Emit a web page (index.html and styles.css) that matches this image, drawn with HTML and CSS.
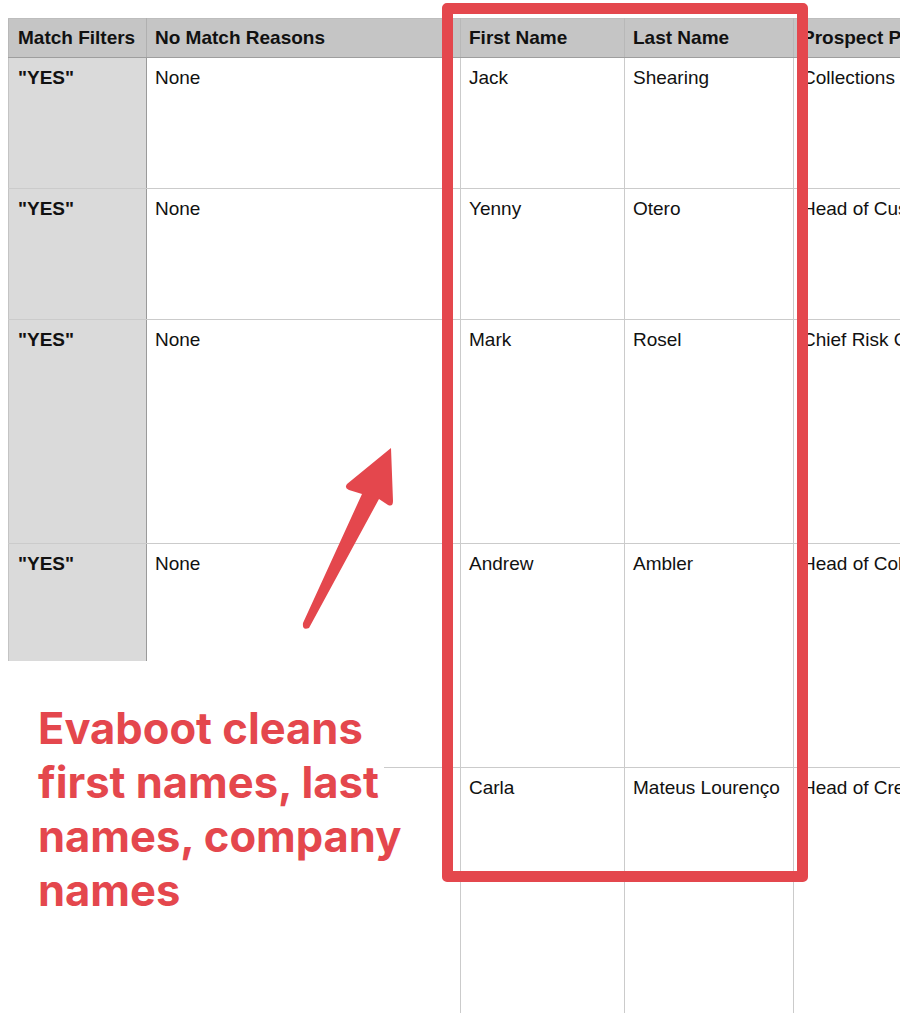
FILE: index.html
```html
<!DOCTYPE html>
<html lang="en">
<head>
<meta charset="utf-8">
<title>Evaboot cleaned export</title>
<link rel="stylesheet" href="styles.css">
</head>
<body>
<div class="page">
  <table class="sheet">
    <colgroup>
      <col class="c-match">
      <col class="c-reason">
      <col class="c-first">
      <col class="c-last">
      <col class="c-pos">
    </colgroup>
    <thead>
      <tr>
        <th class="match">Match Filters</th>
        <th>No Match Reasons</th>
        <th>First Name</th>
        <th>Last Name</th>
        <th>Prospect Position</th>
      </tr>
    </thead>
    <tbody>
      <tr class="r-short">
        <td class="match">"YES"</td>
        <td>None</td>
        <td>Jack</td>
        <td>Shearing</td>
        <td>Collections Manager</td>
      </tr>
      <tr class="r-short">
        <td class="match">"YES"</td>
        <td>None</td>
        <td>Yenny</td>
        <td>Otero</td>
        <td>Head of Customer Success</td>
      </tr>
      <tr class="r-tall">
        <td class="match">"YES"</td>
        <td>None</td>
        <td>Mark</td>
        <td>Rosel</td>
        <td>Chief Risk Officer</td>
      </tr>
      <tr class="r-tall">
        <td class="match">"YES"</td>
        <td>None</td>
        <td>Andrew</td>
        <td>Ambler</td>
        <td>Head of Collections</td>
      </tr>
      <tr class="r-last">
        <td class="match"></td>
        <td></td>
        <td>Carla</td>
        <td>Mateus Lourenço</td>
        <td>Head of Credit Risk</td>
      </tr>
    </tbody>
  </table>

  <div class="highlight"></div>

  <svg class="arrow" width="900" height="1013" viewBox="0 0 900 1013" aria-hidden="true">
    <path d="M391 448 L347 484 Q344 488 349 490 L362 494 L303 623 Q302 631 309 628 L379 499 L388 505 Q393 507 393 501 Z" fill="#e4474d"/>
  </svg>

  <div class="note">
    <p class="note-text">Evaboot cleans first names, last names, company names</p>
  </div>
</div>
</body>
</html>
```

FILE: styles.css
```css
* { box-sizing: border-box; }

html, body {
  margin: 0;
  padding: 0;
  background: #ffffff;
}

body {
  width: 900px;
  height: 1013px;
  overflow: hidden;
  font-family: "Liberation Sans", Arial, Helvetica, sans-serif;
  color: #111111;
}

.page {
  position: relative;
  width: 900px;
  height: 1013px;
  overflow: hidden;
  padding: 18px 0 0 8px;
}

.sheet {
  border-collapse: collapse;
  table-layout: fixed;
  width: 892px;
  font-size: 19px;
  line-height: 22px;
}

.c-match { width: 138px; }
.c-reason { width: 314px; }
.c-first { width: 164px; }
.c-last { width: 169px; }
.c-pos { width: 107px; }

.sheet th,
.sheet td {
  text-align: left;
  vertical-align: top;
  white-space: nowrap;
  overflow: hidden;
  padding: 8px 8px;
}

.sheet th {
  background: #c5c5c5;
  font-weight: 700;
  border-top: 1px solid #bdbdbd;
  border-left: 1px solid #b8b8b8;
  border-right: 1px solid #b8b8b8;
  border-bottom: 1px solid #9e9e9e;
}

.sheet td {
  font-weight: 400;
  border: 1px solid #cbcbcb;
  padding-top: 9px;
}

.sheet th.match,
.sheet td.match {
  padding-left: 9px;
}

.sheet td.match {
  background: #dadada;
  font-weight: 700;
  border-left: 1px solid #c4c4c4;
  border-right: 1px solid #9a9a9a;
}

.sheet th.match {
  border-right: 1px solid #b0b0b0;
}

.r-short td { height: 131px; }
.r-tall td { height: 224px; }
.r-last td {
  height: 245px;
  border-bottom: none;
}

.highlight {
  position: absolute;
  left: 442px;
  top: 3px;
  width: 366px;
  height: 879px;
  border: 11px solid #e4474d;
  border-radius: 5px;
}

.arrow {
  position: absolute;
  left: 0;
  top: 0;
  pointer-events: none;
}

.note {
  position: absolute;
  left: 0;
  top: 661px;
  width: 384px;
  height: 352px;
  background: #ffffff;
  padding: 40px 0 0 38px;
}

.note-text {
  margin: 0;
  width: 380px;
  font-family: Inter, "Noto Sans", sans-serif;
  font-weight: 700;
  font-size: 43.5px;
  line-height: 54px;
  color: #e4474d;
  letter-spacing: 0;
}
```
